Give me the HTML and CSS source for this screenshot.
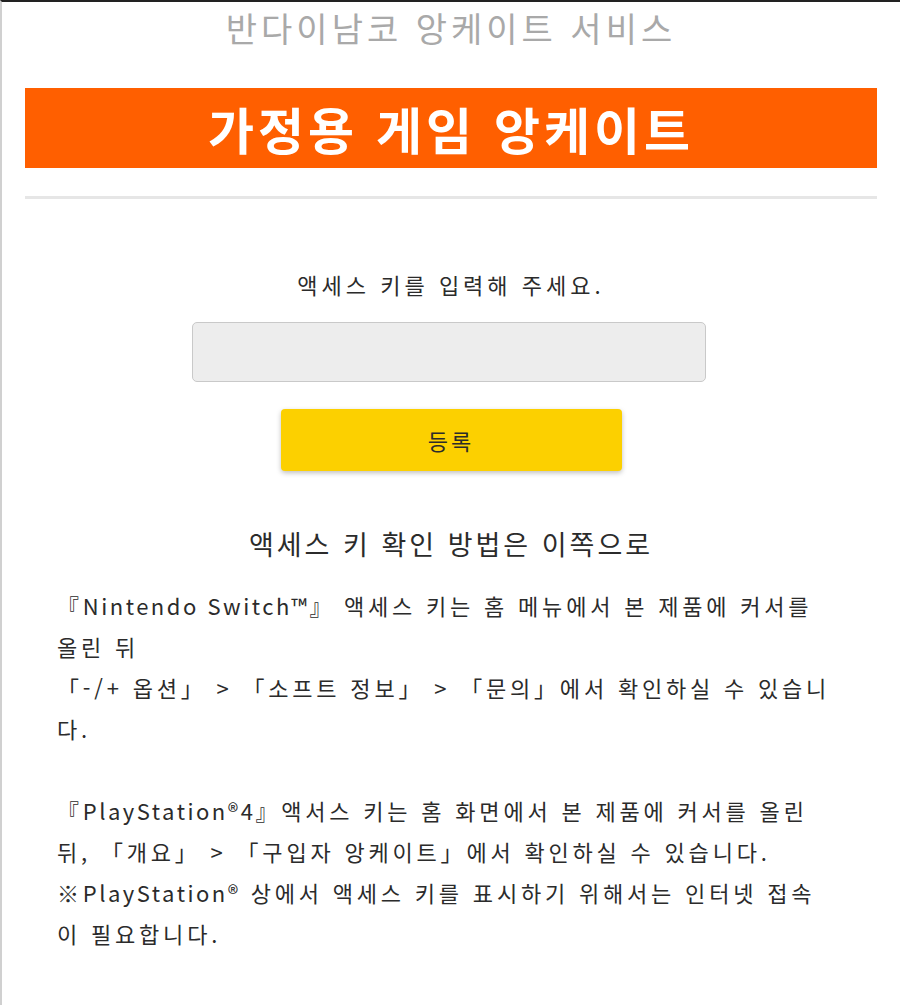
FILE: index.html
```html
<!DOCTYPE html>
<html lang="ko">
<head>
	<meta charset="UTF-8">
	<title>반다이남코 앙케이트 서비스</title>
	<link rel="stylesheet" href="styles.css">
</head>
<body>
	<div class="page">
		<header class="site-title">반다이남코 앙케이트 서비스</header>
		<h1 class="banner">가정용 게임 앙케이트</h1>
		<hr class="rule">
		<form class="key-form" onsubmit="return false;">
			<p class="key-label">액세스 키를 입력해 주세요.</p>
			<input type="text" class="key-input">
			<button type="submit" class="key-btn">등록</button>
		</form>
		<section class="help">
			<h2 class="help-title">액세스 키 확인 방법은 이쪽으로</h2>
			<p class="help-text">『<span class="en">Nintendo Switch™</span>』 액세스 키는 홈 메뉴에서 본 제품에 커서를 올린 뒤<br>「-/+ 옵션」 &gt; 「소프트 정보」 &gt; 「문의」에서 확인하실 수 있습니다.</p>
			<p class="help-text">『<span class="en">PlayStation®4</span>』액서스 키는 홈 화면에서 본 제품에 커서를 올린 뒤, 「개요」 &gt; 「구입자 앙케이트」에서 확인하실 수 있습니다.<br>※<span class="en">PlayStation®</span> 상에서 액세스 키를 표시하기 위해서는 인터넷 접속이 필요합니다.</p>
		</section>
	</div>
</body>
</html>
```

FILE: styles.css
```css
*{
	margin: 0;
	padding: 0;
	box-sizing: border-box;
}
html,body{
	height: 100%;
}
body{
	background: #fff;
	font-family: "Noto Sans CJK KR", "Noto Sans", sans-serif;
	color: #2b2b2b;
	border-top: 2px solid #222;
	border-left: 2px solid #d0d0d0;
}
.page{
	padding: 0 23px;
}
.site-title{
	color: #a9a9a9;
	font-size: 34px;
	letter-spacing: 4px;
	line-height: 52px;
	text-align: center;
	margin-bottom: 34px;
}
.banner{
	background: #ff5f00;
	color: #fff;
	font-size: 50px;
	font-weight: bold;
	letter-spacing: 4px;
	line-height: 80px;
	height: 80px;
	text-align: center;
}
.rule{
	border: none;
	height: 3px;
	background: #e6e6e6;
	margin-top: 28px;
}
.key-form{
	display: flex;
	flex-direction: column;
	align-items: center;
	padding-top: 70px;
}
.key-label{
	font-size: 22px;
	letter-spacing: 4px;
	line-height: 30px;
	margin-bottom: 23px;
}
.key-input{
	width: 514px;
	height: 60px;
	margin-right: 4px;
	background: #ededed;
	border: 1px solid #c9c9c9;
	border-radius: 5px;
	outline: none;
	font-size: 20px;
	padding: 0 12px;
}
.key-btn{
	width: 341px;
	height: 62px;
	margin-top: 27px;
	background: #fcd000;
	border: none;
	border-radius: 4px;
	box-shadow: 0 2px 5px rgba(0,0,0,.25);
	font-family: inherit;
	font-size: 22px;
	letter-spacing: 3px;
	color: #2b2b2b;
	cursor: pointer;
}
.help{
	padding: 55px 32px 0;
}
.help-title{
	font-size: 27px;
	font-weight: normal;
	letter-spacing: 3px;
	text-align: center;
	line-height: 36px;
	margin-bottom: 23px;
}
.help-text{
	font-size: 22px;
	letter-spacing: 3.8px;
	line-height: 41px;
	padding-right: 14px;
	margin-bottom: 41px;
}
.help-text .en{
	letter-spacing: 2.5px;
}
```
